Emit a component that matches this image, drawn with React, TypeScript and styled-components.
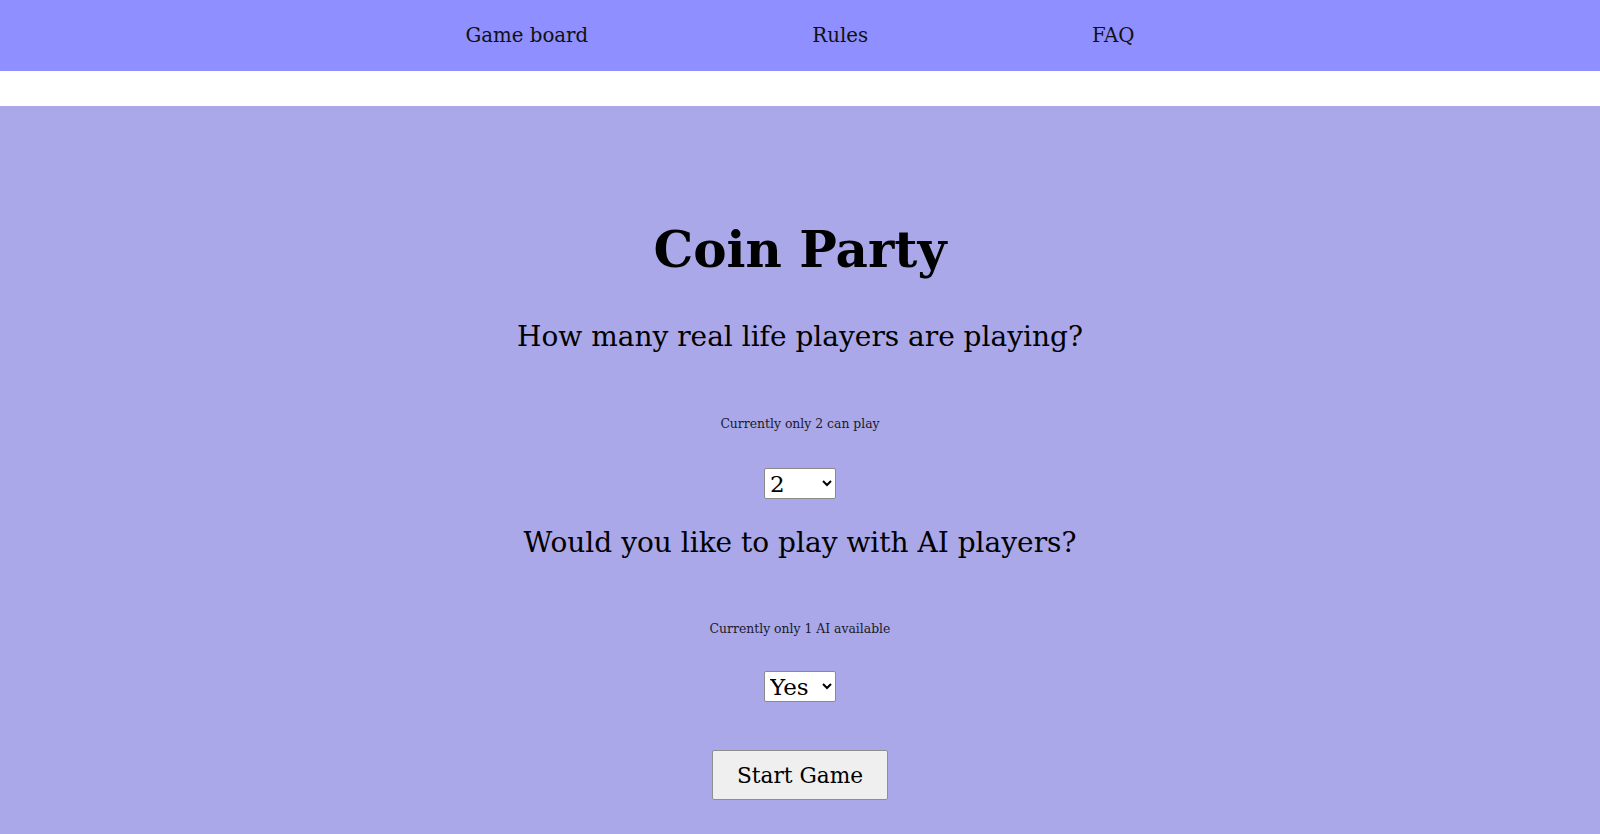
import * as React from 'react';
import styled, { createGlobalStyle } from 'styled-components';

const GlobalStyle = createGlobalStyle`
    html, body {
        margin: 0;
        padding: 0;
        background: #ffffff;
        font-family: "DejaVu Serif", "Liberation Serif", serif;
        color: #000;
    }
`;

const NavBar = styled.nav`
    display: flex;
    justify-content: center;
    align-items: center;
    gap: 224px;
    height: 71px;
    padding-bottom: 1px;
    box-sizing: border-box;
    background-color: #8f8fff;
`;

const NavLink = styled.a`
    font-size: 19.8px;
    color: #111;
    text-decoration: none;
    cursor: pointer;
`;

const Spacer = styled.div`
    height: 35px;
    background: #ffffff;
`;

const Main = styled.main`
    display: flex;
    flex-direction: column;
    align-items: center;
    min-height: 728px;
    padding-top: 113px;
    box-sizing: border-box;
    background-color: #aaa8e8;
`;

const Title = styled.h1`
    margin: 0;
    font-size: 50px;
    line-height: 62px;
    font-weight: bold;
`;

const Question = styled.h2<{ $gap: number }>`
    margin: ${(p) => p.$gap}px 0 0;
    font-size: 28px;
    line-height: 40px;
    font-weight: normal;
`;

const Note = styled.p<{ $gap: number }>`
    margin: ${(p) => p.$gap}px 0 0;
    font-size: 12.4px;
    line-height: 20px;
    color: #1a1a2a;
`;

const Select = styled.select<{ $gap: number }>`
    margin-top: ${(p) => p.$gap}px;
    width: 72px;
    height: 31px;
    padding: 0 1px;
    font-family: "DejaVu Serif", serif;
    font-size: 23px;
    background: #fff;
    border: 1px solid #8a8a8a;
    border-radius: 2px;
    color: #000;
`;

const StartButton = styled.button`
    margin-top: 48px;
    width: 176px;
    height: 50px;
    font-family: "DejaVu Serif", serif;
    font-size: 21.7px;
    color: #000;
    background-color: #efefef;
    border: 1px solid #8f8f8f;
    border-radius: 2px;
    cursor: pointer;
`;

export default function App() {
    const [players, setPlayers] = React.useState('2');
    const [ai, setAi] = React.useState('Yes');

    return (
        <React.Fragment>
            <GlobalStyle />
            <NavBar>
                <NavLink>Game board</NavLink>
                <NavLink>Rules</NavLink>
                <NavLink>FAQ</NavLink>
            </NavBar>
            <Spacer />
            <Main>
                <Title>Coin Party</Title>
                <Question $gap={36}>How many real life players are playing?</Question>
                <Note $gap={57}>Currently only 2 can play</Note>
                <Select $gap={34} value={players} onChange={(e) => setPlayers(e.target.value)}>
                    <option value="2">2</option>
                </Select>
                <Question $gap={24}>Would you like to play with AI players?</Question>
                <Note $gap={56}>Currently only 1 AI available</Note>
                <Select $gap={32} value={ai} onChange={(e) => setAi(e.target.value)}>
                    <option value="Yes">Yes</option>
                    <option value="No">No</option>
                </Select>
                <StartButton>Start Game</StartButton>
            </Main>
        </React.Fragment>
    );
}
